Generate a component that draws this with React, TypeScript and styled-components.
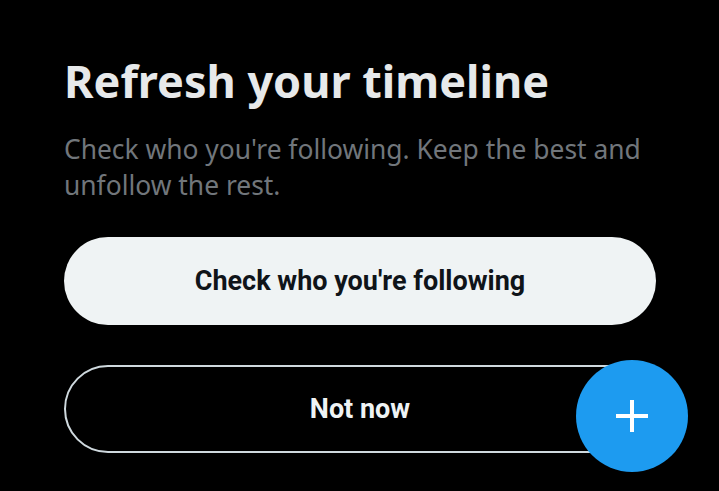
import { createGlobalStyle, styled } from "styled-components";

const GlobalStyle = createGlobalStyle`
  html, body {
    margin: 0;
    padding: 0;
    background: #000;
  }
  body {
    width: 719px;
    height: 491px;
    overflow: hidden;
  }
`;

const Page = styled.main`
  position: relative;
  width: 719px;
  height: 491px;
  box-sizing: border-box;
  padding: 50px 63px 0 64px;
  background: #000;
`;

const Title = styled.h1`
  margin: 0;
  font-family: "Noto Sans", "Open Sans", sans-serif;
  font-size: 45px;
  font-weight: 700;
  line-height: 62px;
  color: #e7e9ea;
`;

const Subtitle = styled.p`
  margin: 19px 0 0;
  font-family: "Noto Sans", "Open Sans", sans-serif;
  font-size: 26.4px;
  line-height: 36px;
  color: #71767b;
`;

const Actions = styled.div`
  display: flex;
  flex-direction: column;
  gap: 40px;
  margin-top: 34px;
`;

const Button = styled.button<{ $variant: "filled" | "outline" }>`
  display: flex;
  align-items: center;
  justify-content: center;
  width: 592px;
  height: 88px;
  box-sizing: border-box;
  border-radius: 44px;
  font-family: Roboto, "Liberation Sans", sans-serif;
  font-size: 27px;
  font-weight: 700;
  cursor: pointer;
  background: ${({ $variant }) => ($variant === "filled" ? "#eff3f4" : "transparent")};
  color: ${({ $variant }) => ($variant === "filled" ? "#0f1419" : "#eff3f4")};
  border: ${({ $variant }) => ($variant === "filled" ? "none" : "2px solid #cfd9de")};
`;

const Fab = styled.button`
  position: absolute;
  left: 576px;
  top: 360px;
  width: 112px;
  height: 112px;
  border-radius: 50%;
  border: none;
  padding: 0;
  background: #1d9bf0;
  display: flex;
  align-items: center;
  justify-content: center;
  cursor: pointer;
`;

const App = () => {
  return (
    <>
      <GlobalStyle />
      <Page>
        <Title>Refresh your timeline</Title>
        <Subtitle>Check who you're following. Keep the best and unfollow the rest.</Subtitle>
        <Actions>
          <Button $variant="filled">Check who you're following</Button>
          <Button $variant="outline">Not now</Button>
        </Actions>
        <Fab aria-label="New">
          <svg width="34" height="34" viewBox="0 0 34 34">
            <rect x="15" y="1" width="4" height="32" fill="#fff" />
            <rect x="1" y="15" width="32" height="4" fill="#fff" />
          </svg>
        </Fab>
      </Page>
    </>
  );
};

export default App;
